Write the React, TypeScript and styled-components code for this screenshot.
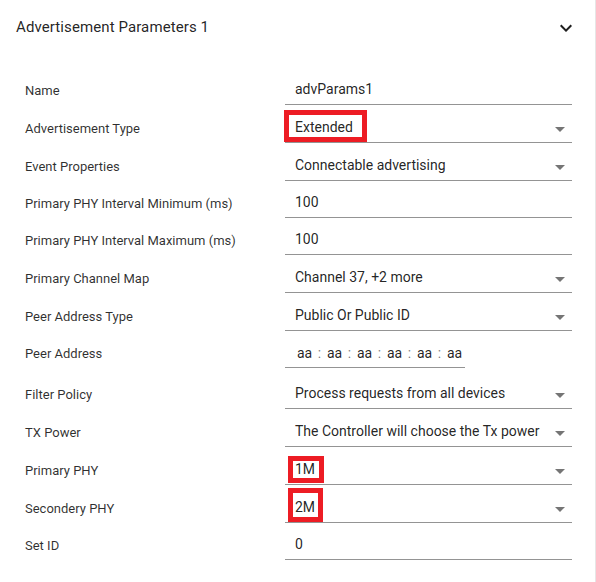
import React from "react";
import styled, { createGlobalStyle } from "styled-components";

const GlobalStyle = createGlobalStyle`
  html, body { margin: 0; padding: 0; background: #ffffff; }
  body { font-family: Roboto, "Noto Sans", "Liberation Sans", Arial, sans-serif; }
  * { box-sizing: border-box; }
`;

const Card = styled.section`
  width: 596px;
  min-height: 582px;
  background: #ffffff;
  border-right: 1px solid #e6e6e6;
`;

const Header = styled.div`
  height: 54px;
  display: flex;
  align-items: center;
  justify-content: space-between;
  padding: 0 17px 0 16px;
`;

const Title = styled.h2`
  margin: 0;
  font-size: 15px;
  font-weight: 400;
  color: rgba(0, 0, 0, 0.87);
  letter-spacing: 0.1px;
`;

const ChevronBox = styled.span`
  width: 24px;
  height: 24px;
  display: flex;
  margin-top: 2px;
  color: #1f1f1f;
`;

const Form = styled.div`
  padding: 14px 23px 0 25px;
  display: flex;
  flex-direction: column;
`;

const Row = styled.div<{ $h: number }>`
  height: ${(p) => p.$h}px;
  display: grid;
  grid-template-columns: 260px 287px;
  align-items: end;
`;

const Label = styled.div`
  font-size: 13px;
  line-height: 20px;
  padding-bottom: 4.5px;
  color: rgba(0, 0, 0, 0.82);
  white-space: nowrap;
`;

const Field = styled.div<{ $w?: number }>`
  position: relative;
  width: ${(p) => (p.$w ? `${p.$w}px` : "100%")};
  height: 32px;
  display: flex;
  align-items: center;
  padding-left: 10px;
  border-bottom: 1px solid #949494;
  font-size: 14px;
  color: rgba(0, 0, 0, 0.87);
  white-space: nowrap;
`;

const Value = styled.span`
  position: relative;
  z-index: 1;
`;

const Arrow = styled.span`
  position: absolute;
  right: 0;
  top: 50%;
  transform: translateY(-42%);
  width: 24px;
  height: 24px;
  display: flex;
  color: rgba(0, 0, 0, 0.54);
`;

const Highlight = styled.span<{ $top: number; $left: number; $w: number; $h: number }>`
  position: absolute;
  top: ${(p) => p.$top}px;
  left: ${(p) => p.$left}px;
  width: ${(p) => p.$w}px;
  height: ${(p) => p.$h}px;
  border: 5px solid #ed1c24;
  pointer-events: none;
`;

const MacField = styled(Field)`
  padding-left: 12px;
  padding-top: 2px;
`;

const MacPart = styled.span`
  width: 15px;
  text-align: center;
`;

const MacSep = styled.span`
  width: 15px;
  text-align: center;
  color: rgba(0, 0, 0, 0.55);
`;

const ExpandMore = () => (
  <svg viewBox="0 0 24 24" width="24" height="24" fill="currentColor">
    <path d="M16.59 8.59 12 13.17 7.41 8.59 6 10l6 6 6-6z" />
  </svg>
);

const DropIcon = () => (
  <svg viewBox="0 0 24 24" width="24" height="24" fill="currentColor">
    <path d="M7 10l5 5 5-5z" />
  </svg>
);

type HL = { top: number; left: number; w: number; h: number };

type RowDef = {
  label: string;
  value?: string;
  select?: boolean;
  mac?: boolean;
  h: number;
  hl?: HL;
};

const rows: RowDef[] = [
  { label: "Name", value: "advParams1", h: 37 },
  {
    label: "Advertisement Type",
    value: "Extended",
    select: true,
    h: 38,
    hl: { top: -1, left: -1, w: 83, h: 32 },
  },
  { label: "Event Properties", value: "Connectable advertising", select: true, h: 38 },
  { label: "Primary PHY Interval Minimum (ms)", value: "100", h: 37 },
  { label: "Primary PHY Interval Maximum (ms)", value: "100", h: 37 },
  { label: "Primary Channel Map", value: "Channel 37, +2 more", select: true, h: 38 },
  { label: "Peer Address Type", value: "Public Or Public ID", select: true, h: 38 },
  { label: "Peer Address", mac: true, h: 37 },
  { label: "Filter Policy", value: "Process requests from all devices", select: true, h: 41 },
  { label: "TX Power", value: "The Controller will choose the Tx power", select: true, h: 38 },
  {
    label: "Primary PHY",
    value: "1M",
    select: true,
    h: 38,
    hl: { top: 3, left: 3, w: 36, h: 27 },
  },
  {
    label: "Secondery PHY",
    value: "2M",
    select: true,
    h: 38,
    hl: { top: -3, left: 3, w: 35, h: 34 },
  },
  { label: "Set ID", value: "0", h: 37 },
];

const MacAddress = () => {
  const parts = ["aa", "aa", "aa", "aa", "aa", "aa"];
  return (
    <MacField $w={180}>
      {parts.map((p, i) => (
        <React.Fragment key={i}>
          {i > 0 && <MacSep>:</MacSep>}
          <MacPart>{p}</MacPart>
        </React.Fragment>
      ))}
    </MacField>
  );
};

export default function App() {
  return (
    <>
      <GlobalStyle />
      <Card>
        <Header>
          <Title>Advertisement Parameters 1</Title>
          <ChevronBox>
            <ExpandMore />
          </ChevronBox>
        </Header>
        <Form>
          {rows.map((r) => (
            <Row key={r.label} $h={r.h}>
              <Label>{r.label}</Label>
              {r.mac ? (
                <MacAddress />
              ) : (
                <Field>
                  <Value>{r.value}</Value>
                  {r.select && (
                    <Arrow>
                      <DropIcon />
                    </Arrow>
                  )}
                  {r.hl && <Highlight $top={r.hl.top} $left={r.hl.left} $w={r.hl.w} $h={r.hl.h} />}
                </Field>
              )}
            </Row>
          ))}
        </Form>
      </Card>
    </>
  );
}
